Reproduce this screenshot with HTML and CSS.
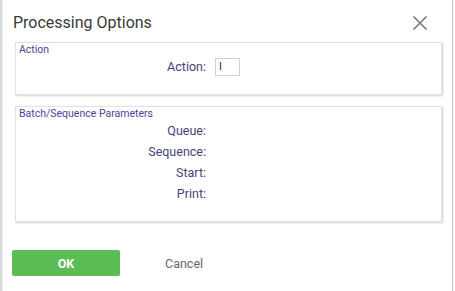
FILE: index.html
```html
<!DOCTYPE html>
<html lang="en">

<head>
    <meta charset="UTF-8">
    <title>Processing Options</title>
    <link rel="stylesheet" href="styles.css">
</head>

<body>
    <div class="shade"></div>

    <div class="dialog">
        <div class="dialog-header">
            <h1>Processing Options</h1>
            <svg class="close" width="16" height="16" viewBox="0 0 16 16">
                <path d="M1.5 1.5 L14.5 14.5 M14.5 1.5 L1.5 14.5" stroke="#7a7a7a" stroke-width="1.6" fill="none" />
            </svg>
        </div>

        <div class="group">
            <div class="legend">Action</div>
            <div class="row">
                <span class="label">Action:</span>
                <span class="field">I</span>
            </div>
        </div>

        <div class="group">
            <div class="legend">Batch/Sequence Parameters</div>
            <div class="row"><span class="label">Queue:</span></div>
            <div class="row"><span class="label">Sequence:</span></div>
            <div class="row"><span class="label">Start:</span></div>
            <div class="row"><span class="label">Print:</span></div>
        </div>

        <div class="dialog-footer">
            <button class="ok-button">OK</button>
            <span class="cancel">Cancel</span>
        </div>
    </div>

    <div class="edge"></div>
</body>

</html>
```

FILE: styles.css
```css
body {
    margin: 0;
    display: flex;
    height: 291px;
    background-color: #fff;
    font-family: Roboto, "Liberation Sans", sans-serif;
}

.shade {
    width: 3px;
    background: linear-gradient(to right, #d4d4d4, #ececec);
}

.edge {
    width: 2px;
    border-left: 1px solid #c4c4c4;
}

.dialog {
    width: 449px;
    background-color: #fff;
}

/* Header with title and close icon */
.dialog-header {
    display: flex;
    justify-content: space-between;
    align-items: center;
    height: 28px;
    padding: 8px 24px 6px 10px;
}

.dialog-header h1 {
    margin: 0;
    font-size: 16px;
    font-weight: normal;
    color: #3a3a3a;
}

.close {
    margin-top: 1px;
}

/* Grouped boxes */
.group {
    margin: 0 10px 11px 12px;
    border: 1px solid #e2e2e2;
    box-shadow: 1px 1px 2px rgba(0, 0, 0, 0.18);
    padding-bottom: 17px;
}

.legend {
    font-size: 10.5px;
    line-height: 12px;
    color: #4a4594;
    padding: 1px 3px 0;
}

.row {
    display: flex;
    align-items: center;
    gap: 9px;
    height: 21px;
}

.group:first-of-type .row {
    margin-top: 4px;
    height: 18px;
}

.label {
    width: 190px;
    text-align: right;
    font-size: 12.5px;
    color: #46437a;
}

.field {
    width: 20px;
    height: 16px;
    border: 1px solid #d0d0d0;
    font-size: 11px;
    line-height: 16px;
    padding-left: 3px;
    color: #333;
}

/* Buttons */
.dialog-footer {
    display: flex;
    align-items: center;
    gap: 45px;
    margin-top: 28px;
    padding-left: 9px;
}

.ok-button {
    width: 108px;
    height: 26px;
    background-color: #5cbc55;
    color: white;
    border: none;
    border-radius: 2px;
    font-family: Roboto, "Liberation Sans", sans-serif;
    font-size: 12.5px;
    font-weight: bold;
    cursor: pointer;
}

.cancel {
    font-size: 12.5px;
    color: #666;
}
```
